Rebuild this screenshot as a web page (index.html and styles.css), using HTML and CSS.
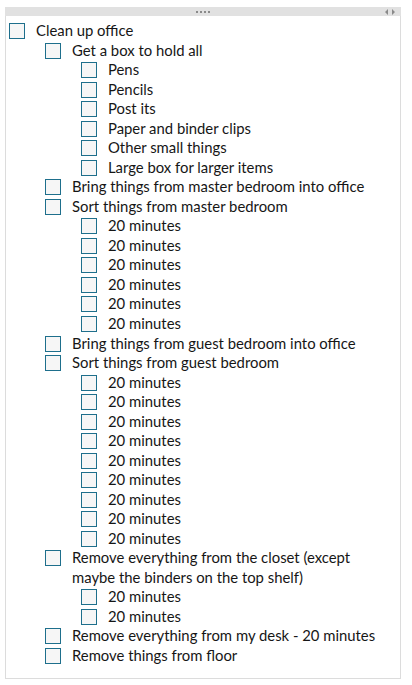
FILE: index.html
```html
<!DOCTYPE html>
<html>
<head>
    <title>Checklist</title>
    <link rel="stylesheet" href="styles.css">
</head>
<body>
    <div class="panel">
        <div class="panel-bar">
            <span class="grip"><i></i><i></i><i></i><i></i></span>
            <span class="arrows">
                <svg width="11" height="6" viewBox="0 0 11 6"><path d="M3 0 L0 3 L3 6 Z M7 0 L10 3 L7 6 Z" fill="#8a8a8a"/></svg>
            </span>
        </div>
        <ul class="todo" id="todo"></ul>
    </div>
    <script>
        var items = [
            [0, 'Clean up office'],
            [1, 'Get a box to hold all'],
            [2, 'Pens'],
            [2, 'Pencils'],
            [2, 'Post its'],
            [2, 'Paper and binder clips'],
            [2, 'Other small things'],
            [2, 'Large box for larger items'],
            [1, 'Bring things from master bedroom into office'],
            [1, 'Sort things from master bedroom'],
            [2, '20 minutes', 6],
            [1, 'Bring things from guest bedroom into office'],
            [1, 'Sort things from guest bedroom'],
            [2, '20 minutes', 9],
            [1, 'Remove everything from the closet (except maybe the binders on the top shelf)'],
            [2, '20 minutes', 2],
            [1, 'Remove everything from my desk - 20 minutes'],
            [1, 'Remove things from floor']
        ];
        var list = document.getElementById('todo');
        items.forEach(function (item) {
            var times = item[2] || 1;
            for (var i = 0; i < times; i++) {
                var li = document.createElement('li');
                li.className = 'todo-item level-' + item[0];
                li.innerHTML = '<span class="box"></span><span class="label">' + item[1] + '</span>';
                list.appendChild(li);
            }
        });
    </script>
</body>
</html>
```

FILE: styles.css
```css
body {
    margin: 7px 0 0 5px;
    font-family: "Lato", "Open Sans", sans-serif;
    font-size: 14.85px;
    color: #161616;
    background: #fff;
}
.panel {
    width: 394px;
    height: 671px;
    border: 1px solid #dcdcdc;
    border-top: none;
}
.panel-bar {
    height: 9px;
    margin: 0 -1px;
    background: #e1e1e1;
    position: relative;
    display: flex;
    justify-content: center;
    align-items: center;
}
.grip {
    display: flex;
    gap: 2px;
}
.grip i {
    width: 2px;
    height: 2px;
    background: #8a8a8a;
}
.arrows {
    position: absolute;
    right: 5px;
    top: 2px;
    line-height: 0;
}
.todo {
    list-style: none;
    margin: 0;
    padding: 5px 10px 0 3px;
}
.todo-item {
    display: flex;
    align-items: flex-start;
    line-height: 19.53px;
}
.level-1 {
    padding-left: 36px;
}
.level-2 {
    padding-left: 72px;
}
.box {
    flex: none;
    width: 16px;
    height: 16px;
    box-sizing: border-box;
    margin: 2px 11px 0 0;
    border: 1px solid #1e6f8c;
    background: #f6f6f6;
}
.label {
    flex: 1;
}
```
